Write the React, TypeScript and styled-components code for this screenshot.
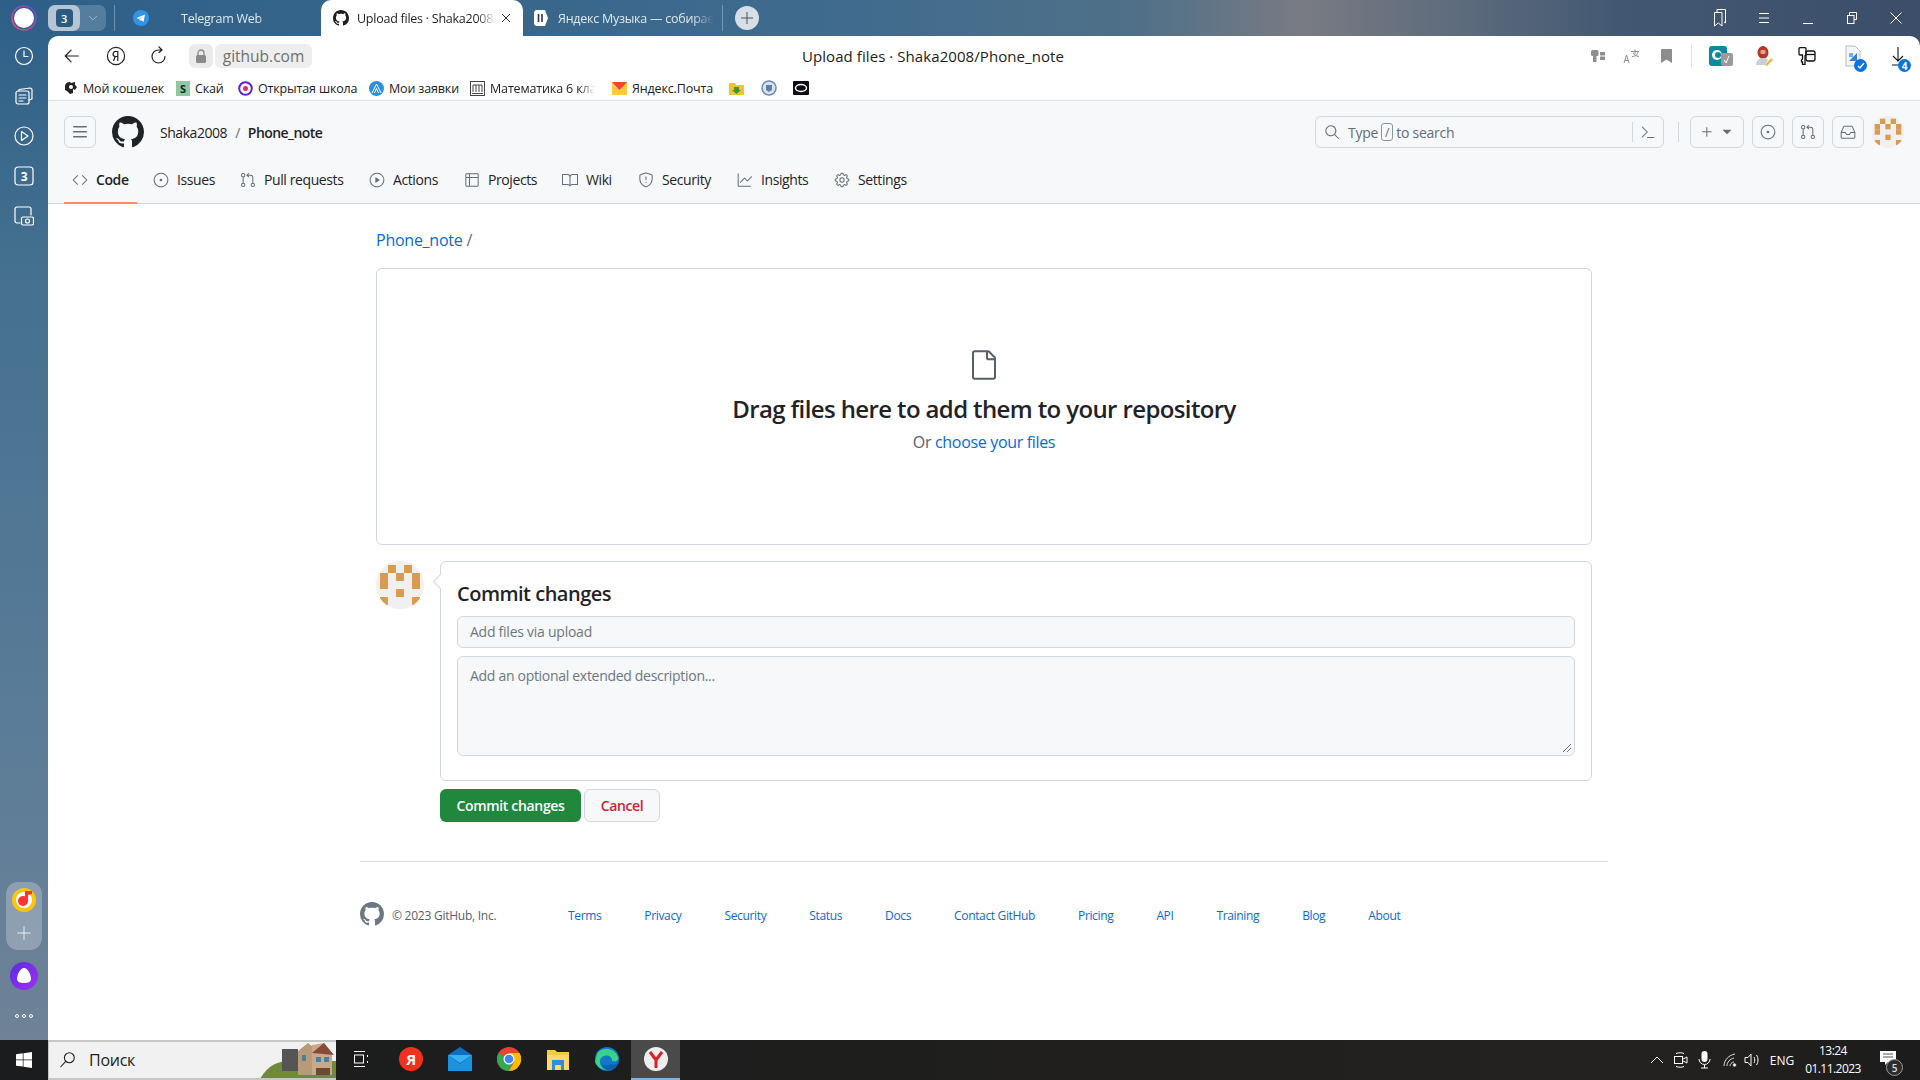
import React from "react";
import styled, { createGlobalStyle } from "styled-components";
import {
  GoBook, GoCode, GoCommandPalette, GoFile, GoGear, GoGitPullRequest, GoGraph, GoInbox, GoIssueOpened,
  GoPlay, GoPlus, GoSearch, GoShield, GoTable, GoTriangleDown,
} from "react-icons/go";

const UI = `"Open Sans", "Liberation Sans", sans-serif`;

const MarkSvg = styled.svg`flex: none;`;
const GoMarkGithub = ({ size = 16 }: { size?: number }) => (
  <MarkSvg width={size} height={size} viewBox="0 0 16 16" fill="currentColor">
    <path d="M8 0c4.420 0 8 3.580 8 8a8.013 8.013 0 0 1-5.450 7.590c-.4.080-.55-.17-.55-.38 0-.27.010-1.130.010-2.200 0-.75-.25-1.230-.54-1.480 1.780-.2 3.650-.88 3.650-3.950 0-.88-.31-1.590-.82-2.150.080-.2.360-1.020-.08-2.120 0 0-.67-.22-2.200.82-.64-.18-1.320-.27-2-.27-.68 0-1.360.090-2 .27-1.530-1.030-2.200-.82-2.200-.82-.44 1.100-.16 1.920-.08 2.120-.51.560-.82 1.280-.82 2.150 0 3.060 1.860 3.750 3.640 3.950-.23.2-.44.550-.51 1.070-.46.210-1.610.550-2.330-.66-.15-.24-.6-.83-1.230-.82-.67.010-.27.380.010.530.340.190.730.9.820 1.130.160.450.680 1.310 2.690.940 0 .670.010 1.300.010 1.490 0 .210-.15.450-.55.380A7.995 7.995 0 0 1 0 8c0-4.420 3.580-8 8-8Z" />
  </MarkSvg>
);
const GoThreeBars = ({ size = 16 }: { size?: number }) => (
  <svg width={size} height={size} viewBox="0 0 16 16" fill="currentColor">
    <path d="M1 2.750A.75.75 0 0 1 1.750 2h12.500a.75.75 0 0 1 0 1.500H1.750A.75.75 0 0 1 1 2.750Zm0 5A.75.75 0 0 1 1.750 7h12.500a.75.75 0 0 1 0 1.500H1.750A.75.75 0 0 1 1 7.750ZM1.750 12h12.500a.75.75 0 0 1 0 1.500H1.750a.75.75 0 0 1 0-1.500Z" />
  </svg>
);

const Global = createGlobalStyle`
  html, body { margin: 0; padding: 0; height: 100%; background: #fff; overflow: hidden; }
  * { box-sizing: border-box; }
  body { font-family: ${UI}; font-size: 14px; color: #1f2328; letter-spacing: -0.25px; }
`;

const Screen = styled.div`width: 1920px; height: 1080px; display: flex; flex-direction: column; overflow: hidden;`;
const Browser = styled.div`flex: 1; min-height: 0; display: flex;`;

const Rail = styled.aside`
  width: 48px; flex: none; display: flex; flex-direction: column; align-items: center;
  background: linear-gradient(180deg, #2d5f88 0%, #44708f 25%, #5a7c98 70%, #6f8297 100%);
`;
const RailSlot = styled.div<{ $h?: number }>`height: ${p => p.$h ?? 40}px; width: 100%; flex: none; display: flex; align-items: center; justify-content: center; color: #fff;`;
const RailSpring = styled.div`flex: 1;`;
const RailGroup = styled.div`
  width: 36px; height: 68px; border-radius: 12px; background: rgba(255,255,255,.25); flex: none;
  display: flex; flex-direction: column; align-items: center; justify-content: space-between; padding: 6px 0 9px; color: #fff;
`;
const AliceSlot = styled.div`height: 40px; margin-top: 6px; display: flex; align-items: center; flex: none;`;
const DotsSlot = styled.div`height: 24px; margin: 8px 0 12px; display: flex; align-items: center; flex: none;`;

const Right = styled.div`flex: 1; min-width: 0; display: flex; flex-direction: column;
  background: linear-gradient(90deg, #2f6088 0%, #3f6b8e 42%, #4f7088 58%, #797b83 67%, #5b6a7c 76%, #425872 84%, #3c4e69 100%);
`;
const TitleBar = styled.div`height: 36px; flex: none; display: flex; align-items: center; color: #fff; padding-right: 2px;`;
const GroupChip = styled.div`width: 58px; height: 26px; border-radius: 7px; background: rgba(255,255,255,.18); display: flex; flex: none;`;
const GroupCurrent = styled.div`width: 32px; height: 26px; border-radius: 7px; background: #b6c5d3; display: flex; align-items: center; justify-content: center;`;
const GroupBadge = styled.div`width: 17px; height: 18px; border-radius: 4px; background: #2b5a82; color: #fff; font-size: 11px; font-weight: 600; display: flex; align-items: center; justify-content: center;`;
const GroupArrow = styled.div`flex: 1; display: flex; align-items: center; justify-content: center; color: #c6d2dc;`;
const TabSep = styled.div<{ $m: string }>`width: 1px; height: 26px; background: rgba(255,255,255,.3); flex: none; margin: ${p => p.$m};`;
const Tab = styled.div<{ $w: number; $active?: boolean }>`
  width: ${p => p.$w}px; height: 36px; flex: none; display: flex; align-items: center; font-size: 12.5px; white-space: nowrap;
  padding: 0 12px; gap: 9px; overflow: hidden;
  color: ${p => (p.$active ? "#1f1f1f" : "#dfe7ee")};
  background: ${p => (p.$active ? "#fff" : "transparent")};
  border-radius: ${p => (p.$active ? "10px 10px 0 0" : "0")};
`;
const TabIcon = styled.span<{ $ml?: number }>`display: flex; flex: none; margin-left: ${p => p.$ml ?? 0}px;`;
const TabText = styled.span<{ $w: number; $offset?: number }>`
  width: ${p => p.$w}px; margin-left: ${p => p.$offset ?? 0}px; overflow: hidden; flex: none;
  mask-image: linear-gradient(90deg, #000 86%, transparent 100%);
`;
const NewTab = styled.div`width: 24px; height: 24px; border-radius: 50%; background: #d7dee5; color: #3d4a58; display: flex; align-items: center; justify-content: center; margin-left: 12px; flex: none;`;
const TitleSpring = styled.div`flex: 1;`;
const WinControl = styled.div`width: 44px; height: 36px; display: flex; align-items: center; justify-content: center; flex: none;`;

const Panel = styled.div`flex: 1; min-height: 0; background: #fff; border-radius: 10px 10px 0 0; display: flex; flex-direction: column;`;
const Toolbar = styled.div`height: 40px; flex: none; display: grid; grid-template-columns: 754px auto 1fr; align-items: center;`;
const ToolLeft = styled.div`display: flex; align-items: center; height: 100%;`;
const ToolBtn = styled.div<{ $w: number }>`width: ${p => p.$w}px; height: 36px; display: flex; align-items: center; justify-content: center; flex: none; color: #222;`;
const LockPill = styled.div`width: 24px; height: 24px; background: #eaeaea; border-radius: 6px; margin-left: 7px; display: flex; align-items: center; justify-content: center; color: #8a8a8a;`;
const UrlPill = styled.div`width: 97px; height: 24px; background: #eeeeee; border-radius: 6px; margin-left: 2px; font-size: 15.5px; color: #6f6f6f; display: flex; align-items: center; justify-content: center; letter-spacing: 0; line-height: 24px;`;
const PageTitle = styled.div`font-size: 15px; color: #222; white-space: nowrap; letter-spacing: 0.07px;`;
const ToolRight = styled.div`display: flex; justify-content: flex-end; align-items: center;`;
const ExtSlot = styled.div<{ $w: number }>`width: ${p => p.$w}px; height: 36px; display: flex; align-items: center; justify-content: center; position: relative; flex: none;`;
const ExtBadge = styled.span<{ $r: number }>`position: absolute; right: ${p => p.$r}px; bottom: 2px; width: 13px; height: 13px; border-radius: 50%; background: #0a73dc; color: #fff; font-size: 10px; font-weight: 700; display: flex; align-items: center; justify-content: center;`;
const ToolSep = styled.div`width: 1px; height: 24px; background: #e4e4e4; margin: 0 6px; flex: none;`;

const Bookmarks = styled.div`height: 25px; flex: none; display: flex; align-items: flex-start; padding-left: 16px; border-bottom: 1px solid #dcdfe3; font-size: 12.5px; color: #222; letter-spacing: -0.15px;`;
const Bookmark = styled.div<{ $w: number }>`width: ${p => p.$w}px; height: 24px; flex: none; display: flex; align-items: center; gap: 5px; white-space: nowrap; overflow: hidden;`;
const BookmarkText = styled.span<{ $fade?: boolean }>`${p => (p.$fade ? "mask-image: linear-gradient(90deg, #000 85%, transparent 100%); width: 105px; overflow: hidden;" : "")}`;

const Header = styled.header`height: 103px; flex: none; background: #f6f8fa; border-bottom: 1px solid #d0d7de; display: flex; flex-direction: column;`;
const HeadRow = styled.div`height: 62px; flex: none; display: flex; align-items: center; padding: 0 16px;`;
const IconButton = styled.div<{ $w?: number }>`
  width: ${p => p.$w ?? 32}px; height: 32px; flex: none; border: 1px solid #d0d7de; border-radius: 6px; background: #f6f8fa;
  display: flex; align-items: center; justify-content: center; color: #656d76; gap: 4px;
`;
const LogoLink = styled.div`margin-left: 16px; display: flex; color: #1f2328;`;
const Crumbs = styled.div`margin-left: 16px; display: flex; align-items: center; font-size: 14px; color: #1f2328; letter-spacing: -0.45px;`;
const CrumbSep = styled.span`margin: 0 8px; color: #656d76;`;
const CrumbStrong = styled.span`font-weight: 600; letter-spacing: -0.55px;`;
const HeadSpring = styled.div`flex: 1;`;
const Search = styled.div`width: 349px; height: 32px; border: 1px solid #d0d7de; border-radius: 6px; display: flex; align-items: center; padding-left: 8px; color: #656d76; font-size: 14px; flex: none;`;
const SearchText = styled.div`flex: 1; display: flex; align-items: center; margin-left: 8px; gap: 3px;`;
const SlashKey = styled.kbd`width: 12px; height: 18px; border: 1px solid #8c959f; border-radius: 3px; font: 12px ${UI}; display: inline-flex; align-items: center; justify-content: center;`;
const SearchCmd = styled.div`width: 31px; height: 20px; border-left: 1px solid #d0d7de; display: flex; align-items: center; justify-content: center;`;
const HeadSep = styled.div`width: 1px; height: 20px; background: #d0d7de; margin: 0 11px 0 14px; flex: none;`;
const HeadBtns = styled.div`display: flex; gap: 8px; align-items: center;`;

const Nav = styled.nav`flex: 1; display: flex; gap: 8px; padding-left: 16px; align-items: stretch;`;
const NavTab = styled.div<{ $active?: boolean; $w: number }>`
  width: ${p => p.$w}px; flex: none;
  display: flex; align-items: center; gap: 8px; padding: 0 0 6px 8px; margin-bottom: -1px; font-size: 14px; white-space: nowrap; letter-spacing: -0.4px;
  font-weight: ${p => (p.$active ? 600 : 400)}; color: #1f2328;
  border-bottom: 2px solid ${p => (p.$active ? "#fd8c73" : "transparent")};
  svg { color: #656d76; flex: none; }
`;

const Page = styled.main`flex: 1; min-height: 0; width: 1248px; margin: 0 auto; padding: 0 16px; display: flex; flex-direction: column;`;
const Path = styled.div`height: 64px; flex: none; display: flex; align-items: center; padding-top: 8px; font-size: 16px; gap: 4px; color: #656d76;`;
const Link = styled.a`color: #0969da; text-decoration: none;`;
const DropZone = styled.section`height: 277px; flex: none; border: 1px solid #d0d7de; border-radius: 6px; display: flex; flex-direction: column; align-items: center; padding-top: 80px; color: #1f2328;`;
const DropIcon = styled.div`height: 32px; display: flex; color: #57606a;`;
const DropTitle = styled.h2`margin: 11px 0 0; font-size: 24px; line-height: 34px; font-weight: 600; letter-spacing: -0.62px;`;
const DropHint = styled.div`margin-top: 4px; font-size: 16px; line-height: 24px; color: #57606a; letter-spacing: -0.33px;`;

const CommitRow = styled.section`display: flex; margin-top: 16px; flex: none;`;
const AvatarBig = styled.div`width: 48px; height: 48px; flex: none; margin-right: 16px; display: flex;`;
const CommitBox = styled.div`
  flex: 1; height: 220px; border: 1px solid #d0d7de; border-radius: 6px; padding: 17px 16px 0 16px; position: relative;
  display: flex; flex-direction: column;
  &::before { content: ""; position: absolute; left: -6px; top: 14px; width: 10px; height: 10px; background: #fff; border-left: 1px solid #d0d7de; border-bottom: 1px solid #d0d7de; transform: rotate(45deg); }
`;
const CommitTitle = styled.h3`margin: 0; height: 37px; font-size: 20px; line-height: 30px; font-weight: 600; color: #1f2328; letter-spacing: -0.5px;`;
const Field = styled.div`height: 32px; flex: none; background: #f6f8fa; border: 1px solid #d0d7de; border-radius: 6px; padding: 0 12px; font-size: 14px; line-height: 30px; color: #6e7781;`;
const Area = styled.div`height: 100px; flex: none; margin-top: 8px; background: #f6f8fa; border: 1px solid #d0d7de; border-radius: 6px; padding: 9px 12px; font-size: 14px; line-height: 20px; color: #6e7781; position: relative; letter-spacing: -0.3px;`;
const Grip = styled.svg`position: absolute; right: 2px; bottom: 2px;`;
const Actions = styled.div`display: flex; margin: 8px 0 0 64px; gap: 3px; flex: none;`;
const PrimaryBtn = styled.div`width: 141px; height: 33px; border-radius: 6px; background: #1f883d; color: #fff; font-weight: 600; font-size: 14px; letter-spacing: -0.32px; display: flex; align-items: center; justify-content: center;`;
const CancelBtn = styled.div`width: 76px; height: 33px; border-radius: 6px; background: #f6f8fa; border: 1px solid #d0d7de; color: #cf222e; font-weight: 600; font-size: 14px; letter-spacing: -0.4px; display: flex; align-items: center; justify-content: center;`;

const Footer = styled.footer`margin: 39px -16px 0; border-top: 1px solid #d8dee4; height: 108px; display: flex; align-items: center; font-size: 12px; flex: none; letter-spacing: -0.35px;`;
const FooterMark = styled.div`display: flex; color: #6e7781; margin: 0 8px 4px 0;`;
const Copy = styled.span`width: 176px; flex: none; color: #57606a; white-space: nowrap; letter-spacing: -0.25px;`;
const FootLinks = styled.div`display: flex; gap: 43px;`;

const Taskbar = styled.div`height: 40px; flex: none; background: linear-gradient(90deg, #1b1c1d, #201f1e 60%, #242220 85%, #1c1c1c); display: flex; align-items: center; color: #fff;`;
const StartBtn = styled.div`width: 48px; height: 40px; display: flex; align-items: center; justify-content: center; flex: none;`;
const TaskSearch = styled.div`width: 288px; height: 40px; background: #f1f1f1; border: 2px solid #c6c6c6; border-right: none; border-left: 1px solid #c6c6c6; display: flex; align-items: center; padding-left: 10px; color: #222; font-size: 16px; gap: 12px; flex: none; overflow: hidden;`;
const SearchWord = styled.span`flex: 1;`;
const TaskIcon = styled.div<{ $active?: boolean; $w?: number }>`
  width: ${p => p.$w ?? 49}px; height: 40px; flex: none; display: flex; align-items: center; justify-content: center;
  background: ${p => (p.$active ? "#4a4a4a" : "transparent")};
  border-bottom: 2px solid ${p => (p.$active ? "#7fb4e0" : "transparent")};
`;
const TaskSpring = styled.div`flex: 1;`;
const Tray = styled.div<{ $w: number }>`width: ${p => p.$w}px; height: 40px; flex: none; display: flex; align-items: center; justify-content: center; font-size: 12px; letter-spacing: 0;`;
const Clock = styled.div`width: 62px; flex: none; display: flex; flex-direction: column; align-items: center; font-size: 12px; line-height: 18px; letter-spacing: -0.55px; white-space: nowrap;`;
const NotifBadge = styled.span`position: absolute; right: 9px; bottom: 4px; width: 17px; height: 17px; border-radius: 50%; background: #2d2d2d; border: 1px solid #999; font-size: 10px; font-weight: 600; display: flex; align-items: center; justify-content: center; color: #ddd;`;
const NotifSlot = styled(Tray)`position: relative; padding-bottom: 4px;`;

const IDENT: [number, number][] = [[1,0],[3,0],[0,1],[2,1],[4,1],[0,2],[4,2],[2,3],[0,4],[4,4]];
const Identicon = ({ size }: { size: number }) => (
  <svg width={size} height={size} viewBox="0 0 48 48">
    <defs><clipPath id={`c${size}`}><circle cx="24" cy="24" r="24" /></clipPath></defs>
    <g clipPath={`url(#c${size})`}>
      <rect width="48" height="48" fill="#f0f0f0" />
      {IDENT.map(([x, y]) => <rect key={`${x}${y}`} x={4 + x * 8} y={4 + y * 8} width="8" height="8" fill="#d99b50" />)}
    </g>
  </svg>
);

const Stroke = ({ s = 20, w = 1.4, c = "currentColor", children }: { s?: number; w?: number; c?: string; children: React.ReactNode }) => (
  <svg width={s} height={s} viewBox="0 0 20 20" fill="none" stroke={c} strokeWidth={w} strokeLinecap="round" strokeLinejoin="round">{children}</svg>
);

const TABS: [React.ComponentType<{ size?: number }>, string, number, boolean?][] = [
  [GoCode, "Code", 73, true], [GoIssueOpened, "Issues", 79], [GoGitPullRequest, "Pull requests", 121], [GoPlay, "Actions", 87],
  [GoTable, "Projects", 90], [GoBook, "Wiki", 68], [GoShield, "Security", 91], [GoGraph, "Insights", 89], [GoGear, "Settings", 80],
];
const FOOT = ["Terms", "Privacy", "Security", "Status", "Docs", "Contact GitHub", "Pricing", "API", "Training", "Blog", "About"];

export default function App() {
  return (
    <Screen>
      <Global />
      <Browser>
        <Rail>
          <RailSlot $h={36}>
            <svg width="26" height="26" viewBox="0 0 26 26"><defs><linearGradient id="ring" x1="0" y1="1" x2="1" y2="0"><stop offset="0" stopColor="#f0506e" /><stop offset="1" stopColor="#5b4bdc" /></linearGradient></defs><circle cx="13" cy="13" r="12" fill="none" stroke="url(#ring)" strokeWidth="1.6" /><circle cx="13" cy="13" r="10" fill="#fff" /></svg>
          </RailSlot>
          <RailSlot><Stroke s={20} w={1.2}><circle cx="10" cy="10" r="8.5" /><path d="M10 5v5.5h4" /></Stroke></RailSlot>
          <RailSlot><Stroke s={20} w={1.2}><rect x="2" y="5" width="13" height="13" rx="2" /><path d="M5 5V3.5L16 2a2 2 0 0 1 2 2v9l-3 1M5 9h7M5 12h7M5 15h4" /></Stroke></RailSlot>
          <RailSlot><Stroke s={20} w={1.2}><circle cx="10" cy="10" r="9" /><path d="M7.5 5.5 14 10l-6.5 4.5z" /></Stroke></RailSlot>
          <RailSlot><svg width="20" height="20" viewBox="0 0 20 20"><rect x="1" y="1" width="18" height="18" rx="3" fill="none" stroke="#fff" strokeWidth="1.2" /><text x="10" y="15" textAnchor="middle" fontSize="12" fontWeight="700" fill="#fff" fontFamily="Open Sans">3</text></svg></RailSlot>
          <RailSlot><Stroke s={20} w={1.2}><path d="M6 17H3a2 2 0 0 1-2-2V3a2 2 0 0 1 2-2h12a2 2 0 0 1 2 2v6" /><rect x="7.5" y="11" width="12" height="8" rx="1.5" /><circle cx="13.5" cy="15" r="2" /></Stroke></RailSlot>
          <RailSpring />
          <RailGroup>
            <svg width="24" height="24" viewBox="0 0 24 24"><circle cx="12" cy="12" r="12" fill="#fdc60b" /><circle cx="12" cy="12" r="8" fill="#fff" /><circle cx="11" cy="13" r="5" fill="#f33" /><path d="M13 3v9h3V7l4-1V3z" fill="#f33" /></svg>
            <Stroke s={16} w={1}><path d="M10 2v16M2 10h16" /></Stroke>
          </RailGroup>
          <AliceSlot>
            <svg width="28" height="28" viewBox="0 0 28 28"><defs><linearGradient id="al" x1="0" y1="0" x2="1" y2="1"><stop offset="0" stopColor="#5a2be0" /><stop offset="1" stopColor="#a030f5" /></linearGradient></defs><circle cx="14" cy="14" r="14" fill="url(#al)" /><path d="M14 6c4 0 7 7 7 11 0 3-3 4-7 4s-7-1-7-4c0-4 3-11 7-11z" fill="#fff" /></svg>
          </AliceSlot>
          <DotsSlot><svg width="20" height="6" viewBox="0 0 20 6" fill="none" stroke="#fff"><circle cx="3" cy="3" r="1.5" /><circle cx="10" cy="3" r="1.5" /><circle cx="17" cy="3" r="1.5" /></svg></DotsSlot>
        </Rail>
        <Right>
          <TitleBar>
            <GroupChip>
              <GroupCurrent><GroupBadge>3</GroupBadge></GroupCurrent>
              <GroupArrow><Stroke s={12} w={1.2}><path d="m4 7 6 6 6-6" /></Stroke></GroupArrow>
            </GroupChip>
            <TabSep $m="0 0 0 8px" />
            <Tab $w={206}>
              <TabIcon $ml={6}><svg width="16" height="16" viewBox="0 0 16 16"><circle cx="8" cy="8" r="8" fill="#2f95e8" /><path d="M3.5 8 12 4.5 10.5 12 8 10l-1.300 1.300V9l3.500-2.600L5.800 9z" fill="#fff" /></svg></TabIcon>
              <TabText $w={90} $offset={23}>Telegram Web</TabText>
            </Tab>
            <Tab $w={202} $active>
              <GoMarkGithub size={16} />
              <TabText $w={139} $offset={-1}>Upload files · Shaka2008/Phone_note</TabText>
              <TabIcon $ml={-4}><svg width="10" height="10" viewBox="0 0 10 10" stroke="#333"><path d="m1 1 8 8M9 1l-8 8" /></svg></TabIcon>
            </Tab>
            <Tab $w={199}>
              <TabIcon $ml={-2}><svg width="16" height="16" viewBox="0 0 16 16"><path d="M1 3a3 3 0 0 1 3-3h8l3 8-3 8H4a3 3 0 0 1-3-3z" fill="#fff" /><path d="M5.500 4v8M9 4v8" stroke="#334" strokeWidth="1.600" /></svg></TabIcon>
              <TabText $w={156}>Яндекс Музыка — собирает музыку</TabText>
            </Tab>
            <TabSep $m="0" />
            <NewTab><Stroke s={14} w={1.3}><path d="M10 2v16M2 10h16" /></Stroke></NewTab>
            <TitleSpring />
            <WinControl><svg width="14" height="20" viewBox="0 0 14 20" fill="none" stroke="#fff"><path d="M4 4V1.500h8.500V15L11 14" /><path d="M1.500 4.500H9V18l-3.700-3L1.500 18z" /></svg></WinControl>
            <WinControl><svg width="12" height="12" viewBox="0 0 12 12" stroke="#fff"><path d="M1 1.500h10M1 6h10M1 10.500h10" /></svg></WinControl>
            <WinControl><svg width="10" height="12" viewBox="0 0 10 12" stroke="#fff"><path d="M0 11.500h10" /></svg></WinControl>
            <WinControl><svg width="12" height="14" viewBox="0 0 12 14" fill="none" stroke="#fff"><path d="M3.500 4V1.500h7v7H8" /><rect x="1.500" y="4.500" width="6.500" height="8" /></svg></WinControl>
            <WinControl><svg width="12" height="12" viewBox="0 0 12 12" stroke="#fff"><path d="m.5.500 11 11M11.500.500l-11 11" /></svg></WinControl>
          </TitleBar>
          <Panel>
            <Toolbar>
              <ToolLeft>
                <ToolBtn $w={48}><Stroke s={18} w={1.3}><path d="M17 10H3M9 3.500 2.500 10 9 16.500" /></Stroke></ToolBtn>
                <ToolBtn $w={40}><svg width="20" height="20" viewBox="0 0 20 20"><circle cx="10" cy="10" r="8.600" fill="none" stroke="#222" strokeWidth="1.200" /><path d="M11.800 15V5.500H10a2.500 2.500 0 0 0-.8 5L7.500 15M11.800 10.500H9.500" fill="none" stroke="#222" strokeWidth="1.200" /></svg></ToolBtn>
                <ToolBtn $w={46}><Stroke s={20} w={1.200}><path d="M16 10.500A6.500 6.500 0 1 1 9.500 4h3M10 1l3 3-3 2.500" /></Stroke></ToolBtn>
                <LockPill><svg width="12" height="14" viewBox="0 0 12 14"><path d="M3 6V4a3 3 0 0 1 6 0v2" fill="none" stroke="currentColor" strokeWidth="1.300" /><rect x="1" y="6" width="10" height="8" rx="1.500" fill="currentColor" /></svg></LockPill>
                <UrlPill>github.com</UrlPill>
              </ToolLeft>
              <PageTitle>Upload files · Shaka2008/Phone_note</PageTitle>
              <ToolRight>
                <ExtSlot $w={34}><svg width="14" height="12" viewBox="0 0 14 12" fill="#8c8f92"><rect x="0" y="0" width="7.500" height="6" rx="1.500" /><rect x="2" y="6" width="3.500" height="6" /><rect x="9" y="2" width="5" height="3.500" /><rect x="9" y="6.500" width="5" height="3.500" /></svg></ExtSlot>
                <ExtSlot $w={32}><svg width="17" height="14" viewBox="0 0 17 14" fill="none" stroke="#8c8f92" strokeWidth="1"><path d="M1 14 3.500 6 6 14M2 11.500h3M8 2.500h8M12 .5v5M9 7.500c3.500 0 6-2 6-5M10 4c1 2 3 3 6 3.500" /></svg></ExtSlot>
                <ExtSlot $w={38}><svg width="11" height="14" viewBox="0 0 11 14"><path d="M0 1a1 1 0 0 1 1-1h9a1 1 0 0 1 1 1v13l-5.500-3.500L0 14z" fill="#8d8d8d" /></svg></ExtSlot>
                <ToolSep />
                <ExtSlot $w={46}><svg width="24" height="20" viewBox="0 0 24 20"><rect x="0" y="0" width="18" height="20" rx="3" fill="#0a8a9a" /><circle cx="8" cy="9" r="5" fill="#fff" /><circle cx="9" cy="9" r="3" fill="#0a8a9a" /><rect x="12" y="7" width="12" height="13" rx="2" fill="#9a9a9a" /><path d="m15 14 2 3 3-7" fill="none" stroke="#fff" /></svg></ExtSlot>
                <ExtSlot $w={40}><svg width="20" height="20" viewBox="0 0 20 20"><ellipse cx="9" cy="6.500" rx="5.500" ry="6.500" fill="#b13a2a" /><rect x="6.500" y="4" width="5" height="4" rx="1" fill="#e9a08e" /><path d="M2 19c0-4 3-7 7-7s4 1 5 2l-3 5H3z" fill="#c8cfd8" /><path d="m11 19 6-7 2 2-6 6z" fill="#e8b84a" /></svg></ExtSlot>
                <ExtSlot $w={46}><svg width="18" height="18" viewBox="0 0 18 18" fill="none" stroke="#111" strokeWidth="1.300"><path d="M2 .7h5a1 1 0 0 1 1 1v6l-1 1v8.600H4.500v-2.500h-1V13l1-1V8H2a1 1 0 0 1-1-1V1.700a1 1 0 0 1 1-1z" /><rect x="8" y="4" width="9" height="10" rx="2" /><path d="M8 7.500h9" /></svg></ExtSlot>
                <ExtSlot $w={46}><svg width="16" height="22" viewBox="0 0 16 22"><path d="M1 1h9l5 5v15H1z" fill="#f4f5f7" stroke="#bbb" /><path d="M4 16 12 8v8z" fill="#3a7fd6" /><rect x="4" y="8" width="4" height="4" fill="#6fb0ea" /></svg><ExtBadge $r={9}><svg width="8" height="8" viewBox="0 0 8 8" fill="none" stroke="#fff" strokeWidth="1.400"><path d="m1 4 2 2 4-5" /></svg></ExtBadge></ExtSlot>
                <ExtSlot $w={44}><svg width="14" height="20" viewBox="0 0 14 20" fill="none" stroke="#111" strokeWidth="1.100"><path d="M7 1v14M2 10l5 5 5-5M1 19h11" /></svg><ExtBadge $r={9}>4</ExtBadge></ExtSlot>
              </ToolRight>
            </Toolbar>
            <Bookmarks>
              <Bookmark $w={112}><svg width="14" height="14" viewBox="0 0 14 14"><path d="M1 5c0-2 2-4 5-4l1 1 4-1v3l2 2-2 3-2-1v4l-3 1-3-3-2-1z" fill="#222" /><circle cx="7" cy="6" r="2" fill="#fff" /></svg><BookmarkText>Мой кошелек</BookmarkText></Bookmark>
              <Bookmark $w={62}><svg width="14" height="15" viewBox="0 0 14 15"><rect width="14" height="15" fill="#8dc9a3" /><text x="7" y="12" textAnchor="middle" fontSize="11" fontWeight="700" fill="#122" fontFamily="Open Sans">S</text></svg><BookmarkText>Скай</BookmarkText></Bookmark>
              <Bookmark $w={131}><svg width="15" height="15" viewBox="0 0 15 15"><circle cx="7.500" cy="7.500" r="6.300" fill="#fff" stroke="#5a24d0" strokeWidth="2" /><circle cx="7.500" cy="7.500" r="2.500" fill="#e8246a" /></svg><BookmarkText>Открытая школа</BookmarkText></Bookmark>
              <Bookmark $w={101}><svg width="15" height="15" viewBox="0 0 15 15"><circle cx="7.500" cy="7.500" r="7.500" fill="#2a8fe0" /><path d="M3 12 7.500 3 12 12M5.500 12 7.500 7.500 9.500 12" fill="none" stroke="#fff" /></svg><BookmarkText>Мои заявки</BookmarkText></Bookmark>
              <Bookmark $w={142}><svg width="15" height="15" viewBox="0 0 15 15" fill="none" stroke="#444"><rect x=".5" y=".5" width="14" height="14" /><path d="M3 11V4h9v7M6 4v7M9 4v7M2 12.500h11" /></svg><BookmarkText $fade>Математика 6 класс</BookmarkText></Bookmark>
              <Bookmark $w={117}><svg width="15" height="13" viewBox="0 0 15 13"><rect width="15" height="13" fill="#fdc83a" /><path d="M0 0h15L7.500 8z" fill="#f0452b" /></svg><BookmarkText>Яндекс.Почта</BookmarkText></Bookmark>
              <Bookmark $w={32}><svg width="15" height="13" viewBox="0 0 15 13"><path d="M0 1h6l1 2h8v10H0z" fill="#f2c230" /><path d="M5 5h5v3h2l-4.500 4L3 8h2z" fill="#3a9a2e" /></svg></Bookmark>
              <Bookmark $w={32}><svg width="16" height="16" viewBox="0 0 16 16"><circle cx="8" cy="8" r="7" fill="#dbe4ee" stroke="#6b8bb0" strokeWidth="1.500" /><path d="M5 5h6v5l-3 2-3-2z" fill="#5f7fa8" /></svg></Bookmark>
              <Bookmark $w={32}><svg width="16" height="14" viewBox="0 0 16 14"><rect width="16" height="14" rx="1" fill="#0e0e12" /><ellipse cx="8" cy="7" rx="5.500" ry="3.500" fill="none" stroke="#fff" strokeWidth="1.500" /></svg></Bookmark>
            </Bookmarks>
            <Header>
              <HeadRow>
                <IconButton><GoThreeBars size={16} /></IconButton>
                <LogoLink><GoMarkGithub size={32} /></LogoLink>
                <Crumbs>Shaka2008<CrumbSep>/</CrumbSep><CrumbStrong>Phone_note</CrumbStrong></Crumbs>
                <HeadSpring />
                <Search>
                  <GoSearch size={16} />
                  <SearchText>Type <SlashKey>/</SlashKey> to search</SearchText>
                  <SearchCmd><GoCommandPalette size={16} /></SearchCmd>
                </Search>
                <HeadSep />
                <HeadBtns>
                  <IconButton $w={54}><GoPlus size={16} /><GoTriangleDown size={16} /></IconButton>
                  <IconButton><GoIssueOpened size={16} /></IconButton>
                  <IconButton><GoGitPullRequest size={16} /></IconButton>
                  <IconButton><GoInbox size={16} /></IconButton>
                  <Identicon size={32} />
                </HeadBtns>
              </HeadRow>
              <Nav>
                {TABS.map(([Icon, label, w, active]) => (
                  <NavTab key={label} $w={w} $active={active}><Icon size={16} />{label}</NavTab>
                ))}
              </Nav>
            </Header>
            <Page>
              <Path><Link>Phone_note</Link> /</Path>
              <DropZone>
                <DropIcon><GoFile size={32} /></DropIcon>
                <DropTitle>Drag files here to add them to your repository</DropTitle>
                <DropHint>Or <Link>choose your files</Link></DropHint>
              </DropZone>
              <CommitRow>
                <AvatarBig><Identicon size={48} /></AvatarBig>
                <CommitBox>
                  <CommitTitle>Commit changes</CommitTitle>
                  <Field>Add files via upload</Field>
                  <Area>
                    Add an optional extended description...
                    <Grip width="10" height="10" viewBox="0 0 10 10" stroke="#777"><path d="M9 1 1 9M9 5 5 9" /></Grip>
                  </Area>
                </CommitBox>
              </CommitRow>
              <Actions>
                <PrimaryBtn>Commit changes</PrimaryBtn>
                <CancelBtn>Cancel</CancelBtn>
              </Actions>
              <Footer>
                <FooterMark><GoMarkGithub size={24} /></FooterMark>
                <Copy>© 2023 GitHub, Inc.</Copy>
                <FootLinks>{FOOT.map(f => <Link key={f}>{f}</Link>)}</FootLinks>
              </Footer>
            </Page>
          </Panel>
        </Right>
      </Browser>
      <Taskbar>
        <StartBtn><svg width="16" height="16" viewBox="0 0 16 16" fill="#fff"><path d="M0 2.300 6.800 1.300v6.200H0zM7.500 1.200 16 0v7.500H7.500zM0 8.300h6.800v6.300L0 13.700zM7.500 8.300H16V16l-8.500-1.200z" /></svg></StartBtn>
        <TaskSearch>
          <Stroke s={18} w={1.200} c="#222"><circle cx="11.500" cy="7.500" r="5.500" /><path d="M7.500 11.500 2 17.500" /></Stroke>
          <SearchWord>Поиск</SearchWord>
          <svg width="76" height="38" viewBox="0 0 76 38"><path d="M0 38C8 24 18 20 30 20h46v18z" fill="#6f8a3a" /><path d="M22 8h16v22H22z" fill="#555" /><path d="M38 10l10-8 10 8v24H38z" fill="#b99a78" /><path d="M52 4l12-2 8 12v20H52z" fill="#c9a98a" /><path d="M52 12 64 2l10 12z" fill="#8a4a3a" /><rect x="42" y="14" width="4" height="6" fill="#4b7fa0" /><rect x="56" y="16" width="5" height="5" fill="#4b7fa0" /><rect x="64" y="16" width="5" height="5" fill="#4b7fa0" /><rect x="56" y="27" width="14" height="7" fill="#6b4a30" /></svg>
        </TaskSearch>
        <TaskIcon $w={50}><svg width="16" height="16" viewBox="0 0 16 16" fill="none" stroke="#fff"><path d="M1 .5h11M1 15.500h11" /><rect x="1.500" y="4" width="9" height="8" /><path d="M14.500 4v2M14.500 10v2" /></svg></TaskIcon>
        <TaskIcon><svg width="24" height="24" viewBox="0 0 24 24"><circle cx="12" cy="12" r="12" fill="#f0321c" /><text x="12" y="18" textAnchor="middle" fontSize="15" fontWeight="700" fill="#fff" fontFamily="Open Sans">Я</text></svg></TaskIcon>
        <TaskIcon><svg width="24" height="24" viewBox="0 0 24 24"><path d="M0 8 12 0l12 8v16H0z" fill="#0e6fc2" /><path d="M0 8h24L12 16z" fill="#38b0f2" /><path d="M0 8v16h24V8L12 17z" fill="#1a94e0" /></svg></TaskIcon>
        <TaskIcon><svg width="24" height="24" viewBox="0 0 24 24"><circle cx="12" cy="12" r="12" fill="#ea4335" /><path d="M12 12 1.600 6A12 12 0 0 0 12 24l5-12z" fill="#34a853" /><path d="M12 6h10.500A12 12 0 0 1 12 24l5-9z" fill="#fbbc05" /><circle cx="12" cy="12" r="5.500" fill="#fff" /><circle cx="12" cy="12" r="4.300" fill="#4285f4" /></svg></TaskIcon>
        <TaskIcon><svg width="24" height="24" viewBox="0 0 24 24"><path d="M1 3h8l2 2h12v18H1z" fill="#f3c84b" /><path d="M1 8h22v15H1z" fill="#fbd96b" /><path d="M6 13h12v10h-3v-5H9v5H6z" fill="#2a8fd8" /></svg></TaskIcon>
        <TaskIcon><svg width="24" height="24" viewBox="0 0 24 24"><circle cx="12" cy="12" r="12" fill="#1478c8" /><path d="M2 7c3-6 17-8 21 3 1 4-3 5-6 4 1-5-7-8-11-3-3 4 0 11 7 12-6 0-11-3-13-8z" fill="#38d28a" /><path d="M12 23c5 0 10-2 12-8-3 3-6 3-8 2-4 2-8 2-10 0 1 3 3 5 6 6z" fill="#0b5fb0" /></svg></TaskIcon>
        <TaskIcon $active><svg width="24" height="24" viewBox="0 0 24 24"><circle cx="12" cy="12" r="12" fill="#eee" /><path d="M6 5l6 8 6-8M12 13v8" fill="none" stroke="#d8222a" strokeWidth="3" /></svg></TaskIcon>
        <TaskSpring />
        <Tray $w={30}><svg width="14" height="8" viewBox="0 0 14 8" fill="none" stroke="#fff"><path d="m1 7 6-6 6 6" /></svg></Tray>
        <Tray $w={18}><svg width="14" height="18" viewBox="0 0 14 18" fill="none" stroke="#fff"><path d="M2 2.500c3-1 6-1 8 0M2 15.500c3 1 6 1 8 0" /><rect x=".5" y="5.500" width="8" height="7" /><path d="M9 8l4-2v6l-4-2" /></svg></Tray>
        <Tray $w={28}><svg width="13" height="18" viewBox="0 0 13 18"><rect x="3.500" y="0" width="6" height="11" rx="3" fill="#fff" /><path d="M1 8a5.500 5.500 0 0 0 11 0M6.500 14v3M3 17h7" stroke="#fff" fill="none" /></svg></Tray>
        <Tray $w={24}><svg width="14" height="14" viewBox="0 0 14 14" fill="none" stroke="#ddd"><path d="M1 13C1 7 6 2 12 1M4 13c0-4 3-7 7-8M7 13c0-2 2-4 4-4" /><circle cx="11.500" cy="12" r="1.300" fill="#fff" /></svg></Tray>
        <Tray $w={20}><svg width="16" height="14" viewBox="0 0 16 14" fill="none" stroke="#fff"><path d="M1 4.500h3L7 1v12L4 9.500H1zM10 4c1 2 1 4 0 6M12.500 2c2 3 2 7 0 10" /></svg></Tray>
        <Tray $w={40}>ENG</Tray>
        <Clock><span>13:24</span><span>01.11.2023</span></Clock>
        <NotifSlot $w={48}><svg width="16" height="14" viewBox="0 0 16 14" fill="#fff"><path d="M0 0h16v11H8l-3 3v-3H0z" /><path d="M3 3h10M3 6h10" stroke="#555" /></svg><NotifBadge>5</NotifBadge></NotifSlot>
        <Tray $w={8} />
      </Taskbar>
    </Screen>
  );
}
